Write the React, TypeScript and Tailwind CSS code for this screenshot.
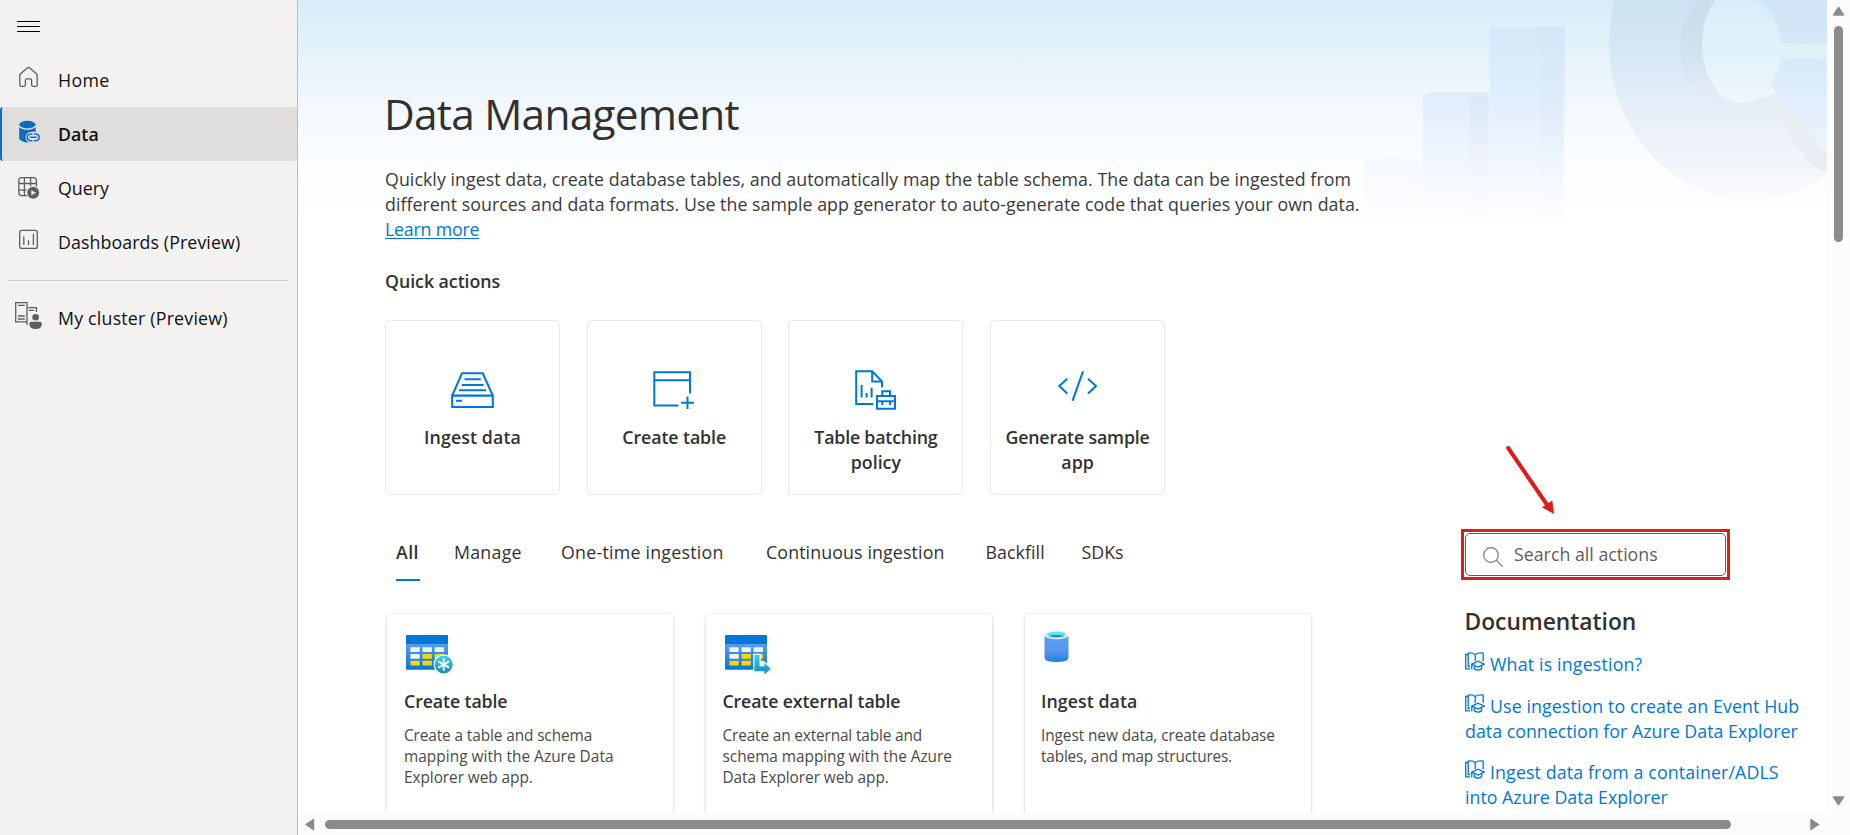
import React from "react";

const BODY = "whitespace-nowrap text-[17.8px] leading-[25px]";

function HomeIcon() {
  return (
    <svg width="30" height="30" viewBox="14 63 30 30" fill="none" stroke="#5f5e5c" strokeWidth="1.3">
      <path d="M19.8 75.5Q19.8 74.5 20.6 73.8L27.5 67.8Q28.5 67 29.5 67.8L36.4 73.8Q37.2 74.5 37.2 75.5V84.8Q37.2 86.4 35.7 86.4H33.2Q31.6 86.4 31.6 84.8V80Q31.6 78.8 30.4 78.8H26.6Q25.4 78.8 25.4 80V84.8Q25.4 86.4 23.8 86.4H21.3Q19.8 86.4 19.8 84.8Z" />
    </svg>
  );
}

function DataIcon() {
  return (
    <svg width="30" height="30" viewBox="14 117 30 30" fill="#0f6cbd">
      <ellipse cx="27.4" cy="124.6" rx="8.2" ry="3.8" />
      <path d="M19.2 127.6Q23 130 27.4 130T35.7 127.6V139Q32.5 142.4 27.4 142.4T19.2 139Z" />
      <rect x="25.6" y="131.8" width="15" height="11" rx="5.5" fill="#e0dedc" />
      <g fill="none" stroke="#0f6cbd" strokeWidth="1.5" strokeLinecap="round">
        <path d="M32 133.9H30.8Q27.3 134.2 27.3 137.3T30.8 140.8H32" />
        <path d="M34.6 133.9H35.7Q39.2 134.2 39.2 137.3T35.7 140.8H34.6" />
        <path d="M30.4 137.3H36.2" />
      </g>
    </svg>
  );
}

function QueryIcon() {
  return (
    <svg width="30" height="30" viewBox="14 171 30 30" fill="none" stroke="#5f5e5c" strokeWidth="1.3">
      <rect x="18.8" y="177.6" width="17.6" height="18" rx="3" />
      <path d="M24.4 177.6V195.6M30.6 177.6V195.6M18.8 183.5H36.4M18.8 190.2H36.4" />
      <circle cx="33.2" cy="192.8" r="7" fill="#f3f2f1" stroke="none" />
      <circle cx="33.2" cy="192.8" r="6" fill="#5f5e5c" stroke="none" />
      <path d="M31.4 190.3L36 192.8L31.4 195.3Z" fill="#f3f2f1" stroke="none" />
    </svg>
  );
}

function DashboardIcon() {
  return (
    <svg width="30" height="30" viewBox="14 225 30 30" fill="none" stroke="#5f5e5c" strokeWidth="1.3">
      <rect x="19.7" y="230.4" width="17.6" height="18" rx="2" />
      <path d="M23.8 237V244.6M28.5 240.8V244.6M33.4 234.4V244.6" strokeLinecap="round" />
    </svg>
  );
}

function ClusterIcon() {
  return (
    <svg width="30" height="30" viewBox="14 301 30 30" fill="none" stroke="#5f5e5c" strokeWidth="1.3">
      <path d="M27 321.8H15.7V302.7H27V325" />
      <path d="M18 305.3H24.8M18 316H24.8M18 319H24.8M27.6 307.7H36.4V312M28.8 310.3H34" />
      <circle cx="35.6" cy="317.2" r="3.3" fill="#5f5e5c" stroke="none" />
      <path d="M31.2 321.8H40Q41.9 321.8 41.9 323.7Q41.9 329 35.6 329T29.3 323.7Q29.3 321.8 31.2 321.8Z" fill="#5f5e5c" stroke="none" />
    </svg>
  );
}

const NAV = [
  { label: "Home", icon: <HomeIcon />, cls: "tracking-[0.35px]" },
  { label: "Data", icon: <DataIcon />, cls: "font-semibold tracking-[0px]", active: true },
  { label: "Query", icon: <QueryIcon />, cls: "tracking-[0px]" },
  { label: "Dashboards (Preview)", icon: <DashboardIcon />, cls: "tracking-[0.09px]" },
];

function NavItem({ label, icon, cls, active }: { label: string; icon: React.ReactNode; cls: string; active?: boolean }) {
  return (
    <div className={`flex h-[54px] items-center pl-3 text-[#111] ${active ? "rounded-[3px] border-l-2 border-[#0f6cbd] bg-[#e0dedc]" : "border-l-2 border-transparent"}`}>
      <span className="w-11 pb-1">{icon}</span>
      <span className={`${BODY} ${cls}`}>{label}</span>
    </div>
  );
}

function Sidebar() {
  return (
    <nav className="flex h-full w-[298px] shrink-0 flex-col border-r border-[#bdbcbb] bg-[#f3f2f1]">
      <div className="h-[53px] shrink-0 pt-5 pl-[17px]">
        <svg width="24" height="13" viewBox="0 0 24 13" className="block" stroke="#000" strokeWidth="1">
          <path d="M0.5 1.5H22.5M0.5 6.5H22.5M0.5 11.5H22.5" strokeLinecap="round" />
        </svg>
      </div>
      {NAV.map((n) => (
        <NavItem key={n.label} {...n} />
      ))}
      <div className="mx-2 mt-[11px] mb-2.5 h-px shrink-0 bg-[#cfcecd]" />
      <NavItem label="My cluster (Preview)" icon={<ClusterIcon />} cls="tracking-[0.2px]" />
    </nav>
  );
}

function HeroArt() {
  return (
    <svg className="absolute top-0 right-0" width="490" height="230" viewBox="1337 0 490 230">
      <defs>
        <linearGradient id="bar" gradientUnits="userSpaceOnUse" x1="0" y1="27" x2="0" y2="227">
          <stop offset="0" stopColor="#d4e8f8" />
          <stop offset="0.4" stopColor="#e2effc" />
          <stop offset="0.68" stopColor="#f2f7fe" />
          <stop offset="0.9" stopColor="#fbfcff" />
          <stop offset="1" stopColor="#ffffff" />
        </linearGradient>
        <linearGradient id="side" gradientUnits="userSpaceOnUse" x1="0" y1="27" x2="0" y2="220">
          <stop offset="0" stopColor="#d2e6f6" />
          <stop offset="0.45" stopColor="#deebf8" />
          <stop offset="0.7" stopColor="#f0f4fb" />
          <stop offset="1" stopColor="#fdfdff" />
        </linearGradient>
        <linearGradient id="ring" gradientUnits="userSpaceOnUse" x1="0" y1="0" x2="0" y2="200">
          <stop offset="0" stopColor="#cbe1f1" />
          <stop offset="0.3" stopColor="#d8e8f5" />
          <stop offset="0.6" stopColor="#e9f0fa" />
          <stop offset="0.85" stopColor="#f3f6fa" />
          <stop offset="1" stopColor="#fafbfc" />
        </linearGradient>
        <linearGradient id="hole" gradientUnits="userSpaceOnUse" x1="0" y1="0" x2="0" y2="105">
          <stop offset="0" stopColor="#d9edf8" />
          <stop offset="0.5" stopColor="#e2f2fa" />
          <stop offset="1" stopColor="#eef7fe" />
        </linearGradient>
        <linearGradient id="wall" gradientUnits="userSpaceOnUse" x1="0" y1="0" x2="0" y2="105">
          <stop offset="0" stopColor="#c8dcea" />
          <stop offset="0.5" stopColor="#d1e2ef" />
          <stop offset="1" stopColor="#e5eef8" />
        </linearGradient>
        <linearGradient id="slice" gradientUnits="userSpaceOnUse" x1="0" y1="0" x2="0" y2="153">
          <stop offset="0" stopColor="#cfe4f6" />
          <stop offset="0.4" stopColor="#d8e9fa" />
          <stop offset="1" stopColor="#edf4fd" />
        </linearGradient>
      </defs>
      <g opacity="0.55">
        <path d="M1364 161Q1380 156 1395 157L1423 159V226H1364Z" fill="url(#bar)" />
        <path d="M1405 163L1423 161V220H1405Z" fill="url(#side)" opacity="0.5" />
      </g>
      <path d="M1423 95L1430 92H1489V226H1423Z" fill="url(#bar)" />
      <path d="M1469 94H1489V220H1469Z" fill="url(#side)" />
      <path d="M1489.5 27H1565L1563 226H1489.5Z" fill="url(#bar)" />
      <path d="M1541 27H1565L1563 220H1539Z" fill="url(#side)" opacity="0.6" />
      <ellipse cx="1750" cy="43" rx="141" ry="157" fill="url(#ring)" />
      <path d="M1702 0H1722V103Q1680 98 1680 43Q1681 17 1702 0Z" fill="url(#wall)" />
      <ellipse cx="1742" cy="44" rx="40" ry="59" fill="url(#hole)" />
      <path d="M1756 0H1827V45L1781 43Q1779 14 1756 0Z" fill="url(#slice)" />
      <path d="M1780 43L1827 45V60L1798 58L1781 61Z" fill="#e1f1f8" />
      <path d="M1781 61L1798 58L1827 60V153L1772 87Q1779 75 1781 61Z" fill="url(#slice)" />
      <path d="M1763 98L1777 94L1827 153V172L1811 165Z" fill="#e9eef3" />
      <path d="M1750 103L1760 98L1777 94L1772 87Z" fill="#edf6fd" />
    </svg>
  );
}

const QUICK = [
  {
    lines: [{ t: "Ingest data", c: "tracking-[0.1px]" }],
    icon: (
      <svg width="50" height="44" viewBox="448 368 50 44" fill="none" stroke="#0078d4" strokeWidth="2.1">
        <path d="M452.2 395.6L462 373.2H482.8L492.8 395.6M452.2 395.6H492.8V407H452.2Z" />
        <path d="M464.5 379.3H480.8M461.8 385H483.6M459 390.3H486M456 400.7H462" />
      </svg>
    ),
  },
  {
    lines: [{ t: "Create table", c: "tracking-[-0.11px]" }],
    icon: (
      <svg width="50" height="44" viewBox="649 368 50 44" fill="none" stroke="#0078d4" strokeWidth="2">
        <path d="M690 393.5V372.3H654.3V405.6H678.5M654.3 380.2H690M687.5 396.5V409M681 402.8H694" />
      </svg>
    ),
  },
  {
    lines: [{ t: "Table batching", c: "tracking-[-0.2px]" }, { t: "policy", c: "" }],
    icon: (
      <svg width="50" height="44" viewBox="851 368 50 44" fill="none" stroke="#0078d4" strokeWidth="2">
        <path d="M873.3 404H856.2V371.2H872.2L882 381.4V387.3M872.2 371V381.4H882" />
        <path d="M861.6 385V397.5M866.6 393V397.5M871.6 387.8V397.5" />
        <path d="M877 396H895V408.8H877ZM882.3 396V391.2H890V396M877 401.2H895M882.3 401V405M890 401V405" />
      </svg>
    ),
  },
  {
    lines: [{ t: "Generate sample", c: "tracking-[-0.17px]" }, { t: "app", c: "" }],
    icon: (
      <svg width="50" height="44" viewBox="1053 368 50 44" fill="none" stroke="#0078d4" strokeWidth="2">
        <path d="M1067.3 378.8L1059.3 386L1067.3 393.4M1088 378.8L1096 386L1088 393.4M1083 371.3L1072.5 400.8" />
      </svg>
    ),
  },
];

const TABS = [
  { t: "All", c: "w-[58px] font-semibold tracking-[0.4px]" },
  { t: "Manage", c: "w-[107px] tracking-[0.25px]" },
  { t: "One-time ingestion", c: "w-[205px] tracking-[0.24px]" },
  { t: "Continuous ingestion", c: "w-[219.5px] tracking-[0.12px]" },
  { t: "Backfill", c: "w-[96px] tracking-[0.07px]" },
  { t: "SDKs", c: "tracking-[0px]" },
];

function TableGlyph() {
  const cells = [
    [0, 0, 0],
    [0, 1, 1],
    [1, 1, 0],
  ];
  return (
    <>
      <defs>
        <linearGradient id="tbl" x1="0" y1="0" x2="0" y2="1">
          <stop offset="0.2" stopColor="#5ea0ef" />
          <stop offset="1" stopColor="#0078d4" />
        </linearGradient>
        <linearGradient id="teal" x1="0" y1="0" x2="0" y2="1">
          <stop offset="0" stopColor="#32d4f5" />
          <stop offset="1" stopColor="#198ab3" />
        </linearGradient>
      </defs>
      <rect x="406" y="635" width="42" height="34.7" rx="0.8" fill="url(#tbl)" />
      <path d="M406 644V636Q406 635 407 635H447Q448 635 448 636V644Z" fill="#0078d4" />
      {cells.map((row, r) =>
        row.map((v, c) => (
          <rect key={`${r}-${c}`} x={410.4 + c * 12.1} y={647.2 + r * 6.8} width="9.4" height="4.8" rx="0.4" fill={v ? "#ffd400" : "#f0f4fd"} />
        ))
      )}
    </>
  );
}

function CreateTableIcon() {
  return (
    <svg width="50" height="46" viewBox="403 630 50 46" className="-ml-px">
      <TableGlyph />
      <circle cx="443.7" cy="664.5" r="10.2" fill="#fff" />
      <circle cx="443.7" cy="664.5" r="9" fill="url(#teal)" />
      <path d="M443.7 658.3V670.7M438.3 661.4L449.1 667.6M438.3 667.6L449.1 661.4" stroke="#fff" strokeWidth="1.9" />
    </svg>
  );
}

function ExternalTableIcon() {
  return (
    <svg width="50" height="46" viewBox="403 630 50 46" className="-ml-px">
      <TableGlyph />
      <path d="M435.4 655H440.6V666.2H445.4V663L451.8 668.8L445.4 674.5V671.2H435.4Z" fill="#fff" stroke="#fff" strokeWidth="2.4" />
      <path d="M435.4 655H440.6V666.2H445.4V663L451.8 668.8L445.4 674.5V671.2H435.4Z" fill="url(#teal)" />
    </svg>
  );
}

function CylinderIcon() {
  return (
    <svg width="50" height="46" viewBox="1041.5 630 50 46">
      <defs>
        <linearGradient id="cyl" x1="0" y1="0" x2="0" y2="1">
          <stop offset="0.1" stopColor="#5ea0ef" />
          <stop offset="0.6" stopColor="#5396ec" />
          <stop offset="1" stopColor="#1f80da" />
        </linearGradient>
      </defs>
      <path d="M1045 635.5V657.5Q1045 662 1057 662T1069 657.5V635.5Z" fill="url(#cyl)" />
      <ellipse cx="1057" cy="635" rx="12" ry="4.3" fill="#e8e8e8" />
      <ellipse cx="1057" cy="634.6" rx="9.3" ry="2.9" fill="#50e6ff" />
      <path d="M1049.5 636.2Q1057 633.6 1064.5 636.2Q1057 638.4 1049.5 636.2Z" fill="#198ab3" />
    </svg>
  );
}

const CARDS = [
  {
    icon: <CreateTableIcon />,
    pad: "pl-[17px]",
    title: "Create table",
    tc: "tracking-[-0.13px]",
    lines: [
      { t: "Create a table and schema", c: "tracking-[-0.11px]" },
      { t: "mapping with the Azure Data", c: "tracking-[0.03px]" },
      { t: "Explorer web app.", c: "tracking-[-0.06px]" },
    ],
  },
  {
    icon: <ExternalTableIcon />,
    pad: "pl-[16.5px]",
    title: "Create external table",
    tc: "tracking-[-0.16px]",
    lines: [
      { t: "Create an external table and", c: "tracking-[-0.15px]" },
      { t: "schema mapping with the Azure", c: "tracking-[-0.04px]" },
      { t: "Data Explorer web app.", c: "tracking-[-0.06px]" },
    ],
  },
  {
    icon: <CylinderIcon />,
    pad: "pl-4",
    title: "Ingest data",
    tc: "tracking-[0.05px]",
    lines: [
      { t: "Ingest new data, create database", c: "tracking-[-0.08px]" },
      { t: "tables, and map structures.", c: "tracking-[-0.19px]" },
    ],
  },
];

function BookIcon() {
  return (
    <svg width="20" height="20" viewBox="1465 652.5 20 20" className="mr-[5px] shrink-0" fill="none" stroke="#0078d4" strokeWidth="1.3">
      <path d="M1470 669.4H1465.7V655H1468" />
      <path d="M1470 667H1468.2V653.7Q1472.3 652.7 1475.2 655Q1478.5 652.7 1483.2 653.7V661.5M1475.2 655V661.5" />
      <path d="M1471.8 664.6L1478 661.6L1484.2 664.6L1478 667.6ZM1474.4 666V669.4Q1478 672 1481.6 669.4V666M1471.8 664.6V670" />
    </svg>
  );
}

const DOCS = [
  { top: "mt-1.5", lines: [{ t: "What is ingestion?", c: "tracking-[0.17px]" }] },
  {
    top: "mt-[17px]",
    lines: [
      { t: "Use ingestion to create an Event Hub", c: "tracking-[0.1px]" },
      { t: "data connection for Azure Data Explorer", c: "tracking-[0.01px]" },
    ],
  },
  {
    top: "mt-4",
    lines: [
      { t: "Ingest data from a container/ADLS", c: "tracking-[0.12px]" },
      { t: "into Azure Data Explorer", c: "tracking-[0px]" },
    ],
  },
];

function DocsPanel() {
  return (
    <aside className="relative mt-[34px] ml-[148px] flex w-[350px] shrink-0 flex-col">
      <svg className="absolute -top-[86px] left-10" width="62" height="74" viewBox="1501 443 62 74">
        <path d="M1508.2 448L1547.5 505.5" stroke="#e01b1b" strokeWidth="4" strokeLinecap="round" />
        <path d="M1554 514L1542 507.3L1552.3 500.5Z" fill="#e01b1b" />
      </svg>
      <div className="h-[51px] w-[269px] border-3 border-[#e01b1b] p-px">
        <div className="flex h-full w-full items-center rounded-[5px] border border-[#605e5c] bg-white pl-[17px]">
          <svg width="20" height="20" viewBox="0 0 20 20" className="mt-1 mr-[11px]" fill="none" stroke="#7a7978" strokeWidth="1.2">
            <circle cx="8" cy="8" r="7.3" />
            <path d="M13.2 13.2L19.5 19.5" />
          </svg>
          <span className={`${BODY} text-[#605e5c]`}>Search all actions</span>
        </div>
      </div>
      <h2 className="mt-[26px] ml-[3.5px] text-[22.8px] leading-[32px] font-semibold whitespace-nowrap text-[#323130]">Documentation</h2>
      <div className="mt-2 ml-1 flex flex-col text-[#0078d4]">
        {DOCS.map((d) => (
          <div key={d.lines[0].t} className={d.top}>
            {d.lines.map((l, i) => (
              <div key={l.t} className="flex">
                {i === 0 && <BookIcon />}
                <span className={`${BODY} ${l.c}`}>{l.t}</span>
              </div>
            ))}
          </div>
        ))}
      </div>
    </aside>
  );
}

function Content() {
  return (
    <div className="relative h-[813px] overflow-hidden bg-[linear-gradient(180deg,#d8ecf7_0px,#e2f2fa_45px,#edf6fd_88px,#f6fafd_125px,#fbfdff_165px,#ffffff_220px)]">
      <HeroArt />
      <div className="relative flex flex-col pt-[84px] pl-[87px] text-[#323130]">
        <h1 className="-ml-px text-[42.4px] leading-[60px] tracking-[-0.75px] whitespace-nowrap">Data Management</h1>
        <p className={`${BODY} mt-[23px] flex flex-col items-start text-[#3b3a39]`}>
          <span className="tracking-[0.052px]">Quickly ingest data, create database tables, and automatically map the table schema. The data can be ingested from</span>
          <span className="tracking-[0.036px]">different sources and data formats. Use the sample app generator to auto-generate code that queries your own data.</span>
          <a className="tracking-[-0.2px] text-[#0078d4] underline underline-offset-2">Learn more</a>
        </p>
        <h3 className={`${BODY} mt-[26.5px] font-semibold tracking-[-0.05px]`}>Quick actions</h3>
        <div className="mt-[26.5px] flex gap-[26.7px]">
          {QUICK.map((q) => (
            <div key={q.lines[0].t} className="flex h-[175px] w-[175px] shrink-0 flex-col items-center rounded-[5px] border border-[#e9e9e9] bg-white pt-[47px] font-semibold">
              {q.icon}
              <div className="mt-[13px] flex flex-col items-center">
                {q.lines.map((l) => (
                  <span key={l.t} className={`${BODY} ${l.c}`}>{l.t}</span>
                ))}
              </div>
            </div>
          ))}
        </div>
        <div className="flex items-start">
          <div className="flex w-[928px] shrink-0 flex-col">
            <div className="mt-[45px] ml-[11px] flex">
              {TABS.map((t, i) => (
                <div key={t.t} className={`${BODY} ${t.c} shrink-0`}>
                  {t.t}
                  {i === 0 && <div className="mt-3.5 h-0.5 w-6 bg-[#0078d4]" />}
                </div>
              ))}
            </div>
            <div className="mt-[33px] ml-0.5 flex gap-[33px]">
              {CARDS.map((c) => (
                <div key={c.title} className={`flex h-[230px] w-[286px] shrink-0 flex-col rounded-[4px] bg-white pt-4 shadow-[0_2px_4px_rgba(0,0,0,0.12),0_0_3px_rgba(0,0,0,0.1)] ${c.pad}`}>
                  {c.icon}
                  <h4 className={`${BODY} mt-[13px] font-semibold ${c.tc}`}>{c.title}</h4>
                  <div className="mt-[10.5px] flex flex-col text-[15.4px] leading-[21px] text-[#4a4948]">
                    {c.lines.map((l) => (
                      <span key={l.t} className={`whitespace-nowrap ${l.c}`}>{l.t}</span>
                    ))}
                  </div>
                </div>
              ))}
            </div>
          </div>
          <DocsPanel />
        </div>
      </div>
    </div>
  );
}

function Tri({ d }: { d: string }) {
  return (
    <svg width="13" height="13" viewBox="0 0 13 13" className="block shrink-0" fill="#8b8b8b" stroke="#8b8b8b" strokeWidth="1.5" strokeLinejoin="round">
      <path d={d} />
    </svg>
  );
}

export default function App() {
  return (
    <div className="flex h-[835px] w-[1850px] overflow-hidden bg-white font-['Open_Sans','Noto_Sans',sans-serif]">
      <Sidebar />
      <main className="flex w-[1529px] shrink-0 flex-col">
        <Content />
        <div className="flex h-[22px] items-center bg-[#fcfcfc] pl-1.5">
          <Tri d="M9.5 1.5V11.5L2 6.5Z" />
          <div className="ml-2 h-[9px] w-[1406px] rounded-full bg-[#8b8b8b]" />
          <div className="ml-[78px]">
            <Tri d="M2 1.5V11.5L9.5 6.5Z" />
          </div>
        </div>
      </main>
      <div className="flex w-[23px] shrink-0 flex-col items-center bg-[#fcfcfc] pt-[5px]">
        <Tri d="M1.5 10H11.5L6.5 2.5Z" />
        <div className="mt-2 h-[216px] w-[9px] rounded-full bg-[#8b8b8b]" />
        <div className="mt-[552px]">
          <Tri d="M1.5 3H11.5L6.5 10.5Z" />
        </div>
      </div>
    </div>
  );
}
